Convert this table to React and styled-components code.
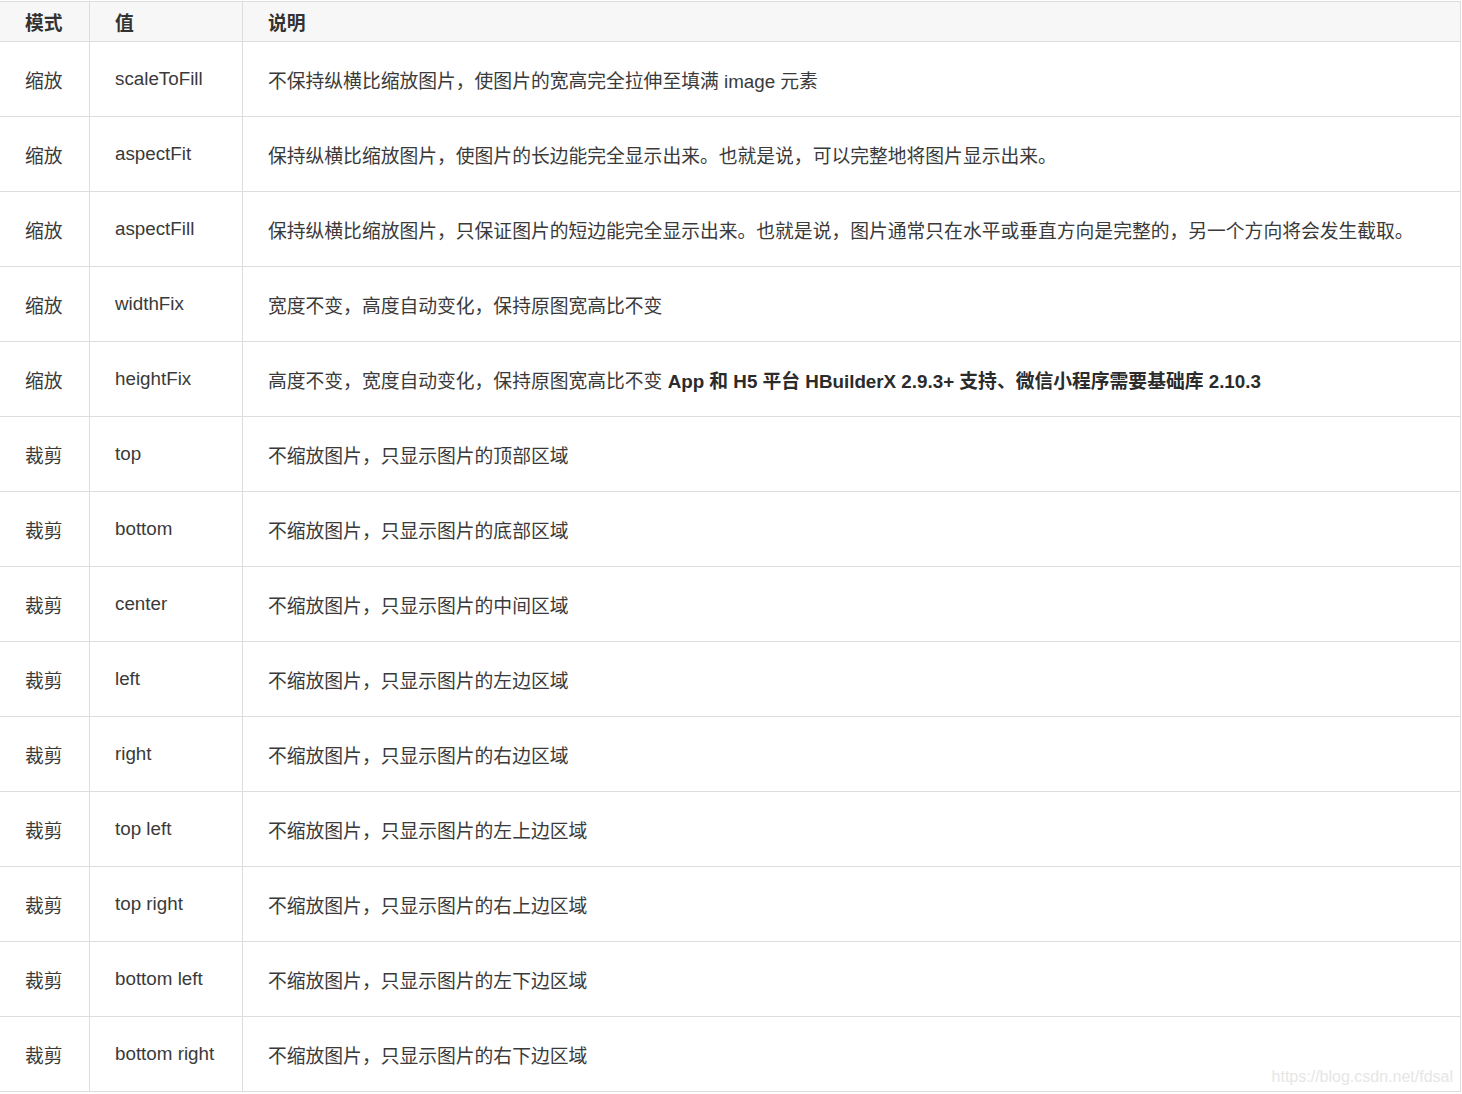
import React from "react";
import styled, { createGlobalStyle } from "styled-components";

const GlobalStyle = createGlobalStyle`
  html, body {
    margin: 0;
    padding: 0;
    background: #fff;
  }
  body {
    font-family: "Liberation Sans", "Noto Sans CJK SC", Arial, sans-serif;
    color: #333;
  }
`;

const Page = styled.div`
  position: relative;
  width: 1462px;
  height: 1094px;
  padding-top: 1px;
  box-sizing: border-box;
  overflow: hidden;
`;

const Table = styled.div`
  width: 1461px;
  border-top: 1px solid #dddddd;
`;

const Row = styled.div`
  display: grid;
  grid-template-columns: 90px 153px 1218px;
  height: ${(p) => (p.$head ? "40px" : "75px")};
  background: ${(p) => (p.$head ? "#f7f7f7" : "#fff")};
  border-bottom: 1px solid #dddddd;
  box-sizing: border-box;
`;

const Cell = styled.div`
  display: flex;
  align-items: center;
  padding-left: 25px;
  box-sizing: border-box;
  border-right: 1px solid #dddddd;
  font-size: 18.8px;
  font-weight: ${(p) => (p.$head ? 700 : 400)};
  color: ${(p) => (p.$head ? "#333" : "#3a3a3a")};
  white-space: nowrap;
`;

const Strong = styled.strong`
  font-weight: 700;
  color: #2b2b2b;
`;

const Watermark = styled.div`
  position: absolute;
  right: 9px;
  bottom: 8px;
  font-size: 16px;
  color: #e6e6e6;
  font-family: "Liberation Sans", Arial, sans-serif;
`;

const rows = [
  ["缩放", "scaleToFill", "不保持纵横比缩放图片，使图片的宽高完全拉伸至填满 image 元素"],
  ["缩放", "aspectFit", "保持纵横比缩放图片，使图片的长边能完全显示出来。也就是说，可以完整地将图片显示出来。"],
  ["缩放", "aspectFill", "保持纵横比缩放图片，只保证图片的短边能完全显示出来。也就是说，图片通常只在水平或垂直方向是完整的，另一个方向将会发生截取。"],
  ["缩放", "widthFix", "宽度不变，高度自动变化，保持原图宽高比不变"],
  [
    "缩放",
    "heightFix",
    <>
      高度不变，宽度自动变化，保持原图宽高比不变{" "}
      <Strong>App 和 H5 平台 HBuilderX 2.9.3+ 支持、微信小程序需要基础库 2.10.3</Strong>
    </>,
  ],
  ["裁剪", "top", "不缩放图片，只显示图片的顶部区域"],
  ["裁剪", "bottom", "不缩放图片，只显示图片的底部区域"],
  ["裁剪", "center", "不缩放图片，只显示图片的中间区域"],
  ["裁剪", "left", "不缩放图片，只显示图片的左边区域"],
  ["裁剪", "right", "不缩放图片，只显示图片的右边区域"],
  ["裁剪", "top left", "不缩放图片，只显示图片的左上边区域"],
  ["裁剪", "top right", "不缩放图片，只显示图片的右上边区域"],
  ["裁剪", "bottom left", "不缩放图片，只显示图片的左下边区域"],
  ["裁剪", "bottom right", "不缩放图片，只显示图片的右下边区域"],
];

export default function App() {
  return (
    <Page>
      <GlobalStyle />
      <Table>
        <Row $head>
          <Cell $head>模式</Cell>
          <Cell $head>值</Cell>
          <Cell $head>说明</Cell>
        </Row>
        {rows.map((r, i) => (
          <Row key={i}>
            <Cell>{r[0]}</Cell>
            <Cell>{r[1]}</Cell>
            <Cell>
              <span>{r[2]}</span>
            </Cell>
          </Row>
        ))}
      </Table>
      <Watermark>https://blog.csdn.net/fdsal</Watermark>
    </Page>
  );
}
